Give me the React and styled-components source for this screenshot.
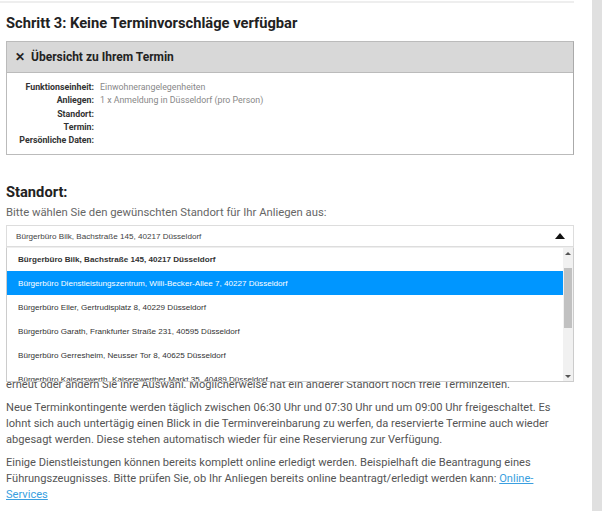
import React from "react";
import styled, { createGlobalStyle } from "styled-components";

const GlobalStyle = createGlobalStyle`
  html, body {
    margin: 0;
    padding: 0;
    background: #fff;
  }
  body {
    font-family: Roboto, "Liberation Sans", sans-serif;
    color: #555;
    overflow: hidden;
  }
`;

const Page = styled.div`
  display: flex;
  width: 602px;
  height: 511px;
  overflow: hidden;
`;

const Main = styled.main`
  width: 568px;
  padding: 0 0 0 6px;
  border-top: 2px solid #eeeeee;
  margin-top: 1px;
`;

const Gutter = styled.div`
  width: 18px;
`;

const SideStrip = styled.aside`
  flex: 1;
  background: #e0e0e0;
`;

const Heading = styled.h2`
  margin: ${(p) => p.$mt || 0}px 0 0 0;
  font-size: 14.7px;
  line-height: 20px;
  font-weight: 700;
  color: #222;
`;

const SummaryBox = styled.section`
  margin-top: 8px;
  border: 1px solid #bbb;
  border-right-color: #aaa;
`;

const SummaryHeader = styled.div`
  display: flex;
  align-items: center;
  gap: 6px;
  height: 30px;
  padding-left: 8px;
  background: #d8d8d8;
  border-bottom: 1px solid #bbb;
  font-size: 12px;
  font-weight: 700;
  color: #222;
`;

const Close = styled.span`
  font-size: 12px;
  line-height: 1;
`;

const SummaryGrid = styled.dl`
  display: grid;
  grid-template-columns: 87px 1fr;
  column-gap: 6px;
  margin: 0;
  padding: 8px 0 7px 0;
  font-size: 8.8px;
  line-height: 13.3px;
`;

const Label = styled.dt`
  text-align: right;
  font-weight: 700;
  color: #333;
`;

const Value = styled.dd`
  margin: 0;
  color: #888;
  min-height: 13px;
`;

const Intro = styled.p`
  margin: 3px 0 4px 0;
  font-size: 11.3px;
  line-height: 16px;
  color: #666;
`;

const SelectWrap = styled.div`
  position: relative;
`;

const SelectBox = styled.div`
  display: flex;
  align-items: center;
  justify-content: space-between;
  height: 20px;
  padding: 0 8px 0 9px;
  border: 1px solid #ddd;
  font-family: "Liberation Sans", Arial, sans-serif;
  font-size: 8.1px;
  color: #444;
`;

const Caret = styled.span`
  width: 0;
  height: 0;
  border-left: 5px solid transparent;
  border-right: 5px solid transparent;
  border-bottom: 6px solid #111;
`;

const OptionList = styled.div`
  position: absolute;
  left: 0;
  right: 0;
  top: 22px;
  height: 133px;
  display: flex;
  background: #fff;
  border: 1px solid #ccc;
  border-top-color: #eee;
  overflow: hidden;
  z-index: 2;
`;

const Options = styled.ul`
  flex: 1;
  margin: -1px 0 0 0;
  padding: 0;
  list-style: none;
`;

const Option = styled.li`
  height: 24px;
  display: flex;
  align-items: center;
  padding-left: 11px;
  font-family: "Liberation Sans", Arial, sans-serif;
  font-size: 8.1px;
  font-weight: ${(p) => (p.$selected ? 700 : 400)};
  color: ${(p) => (p.$active ? "#fff" : "#333")};
  background: ${(p) => (p.$active ? "#0096ff" : "transparent")};
  white-space: nowrap;
`;

const Scrollbar = styled.div`
  width: 10px;
  display: flex;
  flex-direction: column;
  background: #f1f1f1;
`;

const ScrollArrow = styled.div`
  height: 10px;
  display: flex;
  align-items: center;
  justify-content: center;
  &::after {
    content: "";
    border-left: 3px solid transparent;
    border-right: 3px solid transparent;
    ${(p) => (p.$down ? "border-top: 3px solid #555;" : "border-bottom: 3px solid #555;")}
  }
`;

const ScrollThumb = styled.div`
  height: 60px;
  margin: 10px 1px 0 1px;
  background: #c1c1c1;
`;

const ScrollSpace = styled.div`
  flex: 1;
`;

const Text = styled.p`
  margin: ${(p) => p.$mt || 0}px 0 7px 0;
  font-size: 11.1px;
  line-height: 16px;
  color: #555;
`;

const Link = styled.a`
  color: #3a9fe0;
  text-decoration: underline;
`;

const standorte = [
  "Bürgerbüro Bilk, Bachstraße 145, 40217 Düsseldorf",
  "Bürgerbüro Dienstleistungszentrum, Willi-Becker-Allee 7, 40227 Düsseldorf",
  "Bürgerbüro Eller, Gertrudisplatz 8, 40229 Düsseldorf",
  "Bürgerbüro Garath, Frankfurter Straße 231, 40595 Düsseldorf",
  "Bürgerbüro Gerresheim, Neusser Tor 8, 40625 Düsseldorf",
  "Bürgerbüro Kaiserswerth, Kaiserswerther Markt 35, 40489 Düsseldorf",
];

const summary = [
  ["Funktionseinheit:", "Einwohnerangelegenheiten"],
  ["Anliegen:", "1 x Anmeldung in Düsseldorf (pro Person)"],
  ["Standort:", ""],
  ["Termin:", ""],
  ["Persönliche Daten:", ""],
];

export default function App() {
  return (
    <Page>
      <GlobalStyle />
      <Main>
        <Heading $mt={10}>Schritt 3: Keine Terminvorschläge verfügbar</Heading>
        <SummaryBox>
          <SummaryHeader>
            <Close>✕</Close>
            <span>Übersicht zu Ihrem Termin</span>
          </SummaryHeader>
          <SummaryGrid>
            {summary.map(([k, v]) => (
              <React.Fragment key={k}>
                <Label>{k}</Label>
                <Value>{v}</Value>
              </React.Fragment>
            ))}
          </SummaryGrid>
        </SummaryBox>

        <Heading $mt={27}>Standort:</Heading>
        <Intro>Bitte wählen Sie den gewünschten Standort für Ihr Anliegen aus:</Intro>
        <SelectWrap>
          <SelectBox>
            <span>{standorte[0]}</span>
            <Caret />
          </SelectBox>
          <OptionList>
            <Options>
              {standorte.map((s, i) => (
                <Option key={s} $selected={i === 0} $active={i === 1}>
                  {s}
                </Option>
              ))}
            </Options>
            <Scrollbar>
              <ScrollArrow />
              <ScrollThumb />
              <ScrollSpace />
              <ScrollArrow $down />
            </Scrollbar>
          </OptionList>
        </SelectWrap>

        <Text $mt={98}>
          Für den gewählten Standort sind derzeit leider keine freien Termine verfügbar.
          <br />
          Bitte versuchen Sie es zu einem späteren Zeitpunkt
          <br />
          erneut oder ändern Sie Ihre Auswahl. Möglicherweise hat ein anderer Standort noch freie Terminzeiten.
        </Text>
        <Text>
          Neue Terminkontingente werden täglich zwischen 06:30 Uhr und 07:30 Uhr und um 09:00 Uhr freigeschaltet. Es
          lohnt sich auch untertägig einen Blick in die Terminvereinbarung zu werfen, da reservierte Termine auch wieder
          abgesagt werden. Diese stehen automatisch wieder für eine Reservierung zur Verfügung.
        </Text>
        <Text>
          Einige Dienstleistungen können bereits komplett online erledigt werden. Beispielhaft die Beantragung eines
          Führungszeugnisses. Bitte prüfen Sie, ob Ihr Anliegen bereits online beantragt/erledigt werden kann:{" "}
          <Link href="#">Online-Services</Link>
        </Text>
      </Main>
      <Gutter />
      <SideStrip />
    </Page>
  );
}
